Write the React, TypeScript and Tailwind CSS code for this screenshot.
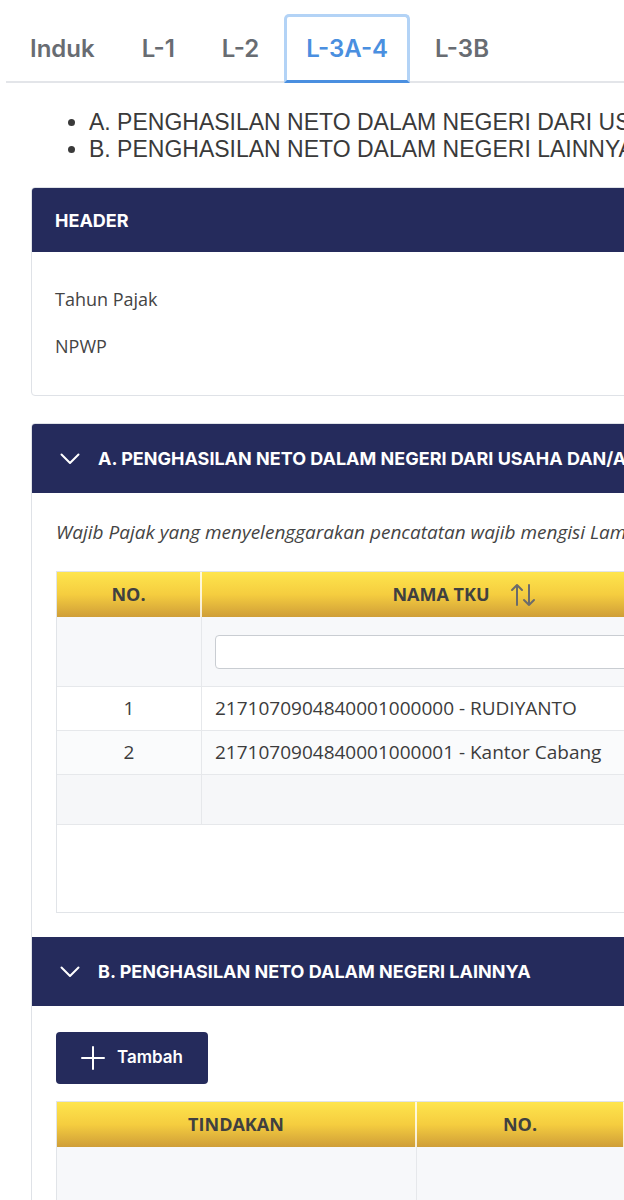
import React from 'react';

const tabs = ['Induk', 'L-1', 'L-2', 'L-3A-4', 'L-3B'];

const rows = [
  { no: '1', tku: '2171070904840001000000 - RUDIYANTO', bg: 'bg-white' },
  { no: '2', tku: '2171070904840001000001 - Kantor Cabang', bg: 'bg-[#fafbfc]' },
];

const ChevronDown = () => (
  <svg width="20" height="12" viewBox="0 0 20 12" fill="none" className="shrink-0">
    <path d="M1.5 1.5 L10 10 L18.5 1.5" stroke="white" strokeWidth="2" strokeLinecap="round" strokeLinejoin="round" />
  </svg>
);

const SortIcon = () => (
  <svg width="26" height="24" viewBox="0 0 26 24" fill="none">
    <path d="M7 22 V2 M2 7 L7 2 L12 7" stroke="#6b6b6b" strokeWidth="2" strokeLinecap="round" strokeLinejoin="round" />
    <path d="M19 2 V22 M14 17 L19 22 L24 17" stroke="#6b6b6b" strokeWidth="2" strokeLinecap="round" strokeLinejoin="round" />
  </svg>
);

const PlusIcon = () => (
  <svg width="24" height="24" viewBox="0 0 24 24" fill="none">
    <path d="M12 1 V23 M1 12 H23" stroke="white" strokeWidth="2" strokeLinecap="round" />
  </svg>
);

const gold = 'bg-gradient-to-b from-[#fee54d] via-[#f5cd3f] to-[#cf9e38]';

export default function App() {
  return (
    <div className="w-[624px] h-[1200px] overflow-hidden bg-white">
      <div className="w-[1100px] pt-[14px]" style={{ fontFamily: '"Open Sans", sans-serif' }}>
        {/* tab strip */}
        <div className="ml-[6px] flex items-end gap-[3px] border-b-2 border-[#e3e5e9] pl-[2px]">
          {tabs.map((t) => {
            const active = t === 'L-3A-4';
            return (
              <div
                key={t}
                className={
                  'h-[69px] -mb-[2px] flex items-center px-[19px] rounded-t-[5px] border-x-[3px] border-t-[3px] border-b-[3px] text-[24px] font-semibold ' +
                  (active
                    ? 'border-x-[#b3d3f6] border-t-[#b3d3f6] border-b-[#4a8fe0] text-[#4a8fe0]'
                    : 'border-transparent text-[#686c72]')
                }
                style={{ fontFamily: 'Inter, sans-serif' }}
              >
                {t}
              </div>
            );
          })}
        </div>

        {/* section list */}
        <ul className="mt-[26px] pl-[89px] list-disc text-[23px] leading-[27px] text-[#3a3a3a]" style={{ fontFamily: '"Liberation Sans", Arial, sans-serif' }}>
          <li>A. PENGHASILAN NETO DALAM NEGERI DARI USAHA DAN/ATAU PEKERJAAN BEBAS</li>
          <li>B. PENGHASILAN NETO DALAM NEGERI LAINNYA</li>
        </ul>

        <div className="ml-[31px] mt-[24px]">
          {/* HEADER card */}
          <div className="rounded-[4px] border border-[#dfe2e7] overflow-hidden">
            <div className="h-[64px] bg-[#252b5c] flex items-center px-[23px] text-white text-[18px] font-bold" style={{ fontFamily: 'Inter, sans-serif' }}>
              HEADER
            </div>
            <div className="pt-[24px] pb-[25px] px-[23px] text-[18px] text-[#444]">
              <div className="h-[47px] flex items-center">Tahun Pajak</div>
              <div className="h-[47px] flex items-center">NPWP</div>
            </div>
          </div>

          {/* A + B panels */}
          <div className="mt-[27px] rounded-[4px] border border-[#dfe2e7] overflow-hidden">
            <div className="h-[69px] bg-[#252b5c] flex items-center gap-[18px] pl-[28px] text-white text-[18px] font-bold" style={{ fontFamily: 'Inter, sans-serif' }}>
              <ChevronDown />
              <span>A. PENGHASILAN NETO DALAM NEGERI DARI USAHA DAN/ATAU PEKERJAAN BEBAS</span>
            </div>
            <div className="px-[24px] pt-[24px] pb-[24px]">
              <p className="italic text-[19px] leading-[30px] text-[#444]">
                Wajib Pajak yang menyelenggarakan pencatatan wajib mengisi Lampiran ini berdasarkan pencatatan yang dimilikinya
              </p>
              <div className="mt-[24px] border border-[#e1e4e8] h-[342px] flex flex-col">
                <div className={'flex h-[45px] text-[18px] font-bold text-[#404040] ' + gold}>
                  <div className="w-[145px] flex items-center justify-center border-r-2 border-white/80">NO.</div>
                  <div className="w-[526px] flex items-center justify-center gap-[20px] border-r-2 border-white/80">
                    NAMA TKU <SortIcon />
                  </div>
                  <div className="flex-1" />
                </div>
                <div className="flex h-[70px] bg-[#f7f8fa] border-b border-[#e6e8eb]">
                  <div className="w-[145px] border-r border-[#e6e8eb]" />
                  <div className="w-[526px] px-[13px] flex items-center border-r border-[#e6e8eb]">
                    <div className="w-full h-[34px] rounded-[4px] border border-[#c9cdd2] bg-white" />
                  </div>
                </div>
                {rows.map((r) => (
                  <div key={r.no} className={'flex h-[44px] border-b border-[#e6e8eb] text-[19px] text-[#3c3c3c] ' + r.bg}>
                    <div className="w-[145px] flex items-center justify-center border-r border-[#e6e8eb]">{r.no}</div>
                    <div className="w-[526px] px-[13px] flex items-center border-r border-[#e6e8eb]">{r.tku}</div>
                  </div>
                ))}
                <div className="flex h-[50px] bg-[#f6f7f9] border-b border-[#e6e8eb]">
                  <div className="w-[145px] border-r border-[#e6e8eb]" />
                  <div className="w-[526px] border-r border-[#e6e8eb]" />
                </div>
                <div className="flex-1 bg-white" />
              </div>
            </div>

            <div className="h-[69px] bg-[#252b5c] flex items-center gap-[18px] pl-[28px] text-white text-[18px] font-bold" style={{ fontFamily: 'Inter, sans-serif' }}>
              <ChevronDown />
              <span>B. PENGHASILAN NETO DALAM NEGERI LAINNYA</span>
            </div>
            <div className="px-[24px] pt-[26px] pb-[24px]">
              <button className="h-[52px] w-[152px] rounded-[4px] bg-[#252b5c] flex items-center justify-center gap-[12px] text-white text-[17px] font-semibold" style={{ fontFamily: 'Inter, sans-serif' }}>
                <PlusIcon />
                Tambah
              </button>
              <div className="mt-[17px] border border-[#e1e4e8]">
                <div className={'flex h-[45px] text-[18px] font-bold text-[#404040] ' + gold}>
                  <div className="w-[360px] flex items-center justify-center border-r-2 border-white/80">TINDAKAN</div>
                  <div className="w-[208px] flex items-center justify-center border-r-2 border-white/80">NO.</div>
                  <div className="flex-1" />
                </div>
                <div className="flex h-[70px] bg-[#f7f8fa]">
                  <div className="w-[360px] border-r border-[#e6e8eb]" />
                  <div className="w-[208px] border-r border-[#e6e8eb]" />
                </div>
              </div>
            </div>
          </div>
        </div>
      </div>
    </div>
  );
}
